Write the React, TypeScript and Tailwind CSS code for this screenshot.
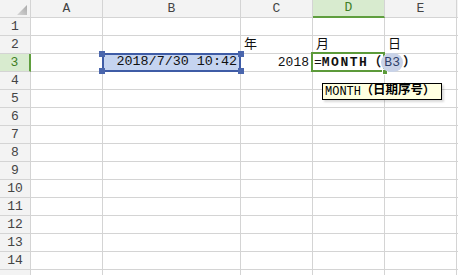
import React from 'react';

const COLS = ['A', 'B', 'C', 'D', 'E'];
const ROWS = Array.from({ length: 15 }, (_, i) => i + 1);
const FONT = { fontFamily: '"Liberation Mono", "Noto Sans CJK SC", monospace' };

function CornerCell() {
  return (
    <div className="relative border-r border-b border-[#d4d4d4] bg-[#f3f3f3]">
      <svg className="absolute left-0 top-0" width="30" height="17" viewBox="0 0 30 17">
        <defs>
          <linearGradient id="tri" x1="0" y1="1" x2="1" y2="0">
            <stop offset="0" stopColor="#d6d6d6" />
            <stop offset="1" stopColor="#a9a9a9" />
          </linearGradient>
        </defs>
        <polygon points="27,5 27,15 17,15" fill="url(#tri)" />
      </svg>
    </div>
  );
}

function ColHeader({ label }: { label: string }) {
  const active = label === 'D';
  return (
    <div
      className={
        active
          ? 'flex items-center justify-center border-r border-r-[#d4d4d4] border-b-2 border-b-[#5f9e3e] bg-[#d8ebcf] text-[#3f7f25] text-[13px]'
          : 'flex items-center justify-center border-r border-b border-[#d4d4d4] bg-[#f3f3f3] text-[#444] text-[13px]'
      }
    >
      {label}
    </div>
  );
}

function RowHeader({ n }: { n: number }) {
  const active = n === 3;
  // row 15 is only a sliver at the bottom edge, its number is hidden
  const label = n < 15 ? n : null;
  return (
    <div
      className={
        active
          ? 'flex items-center justify-center border-b border-b-[#d4d4d4] border-r-2 border-r-[#5f9e3e] bg-[#d8ebcf] text-[#3f7f25] text-[13px]'
          : 'flex items-center justify-center border-r border-b border-[#d4d4d4] bg-[#f3f3f3] text-[#444] text-[13px]'
      }
    >
      {label}
    </div>
  );
}

function Handle({ className }: { className: string }) {
  return <span className={'absolute h-[6px] w-[6px] bg-[#4a66ad] ' + className} />;
}

function DateCell() {
  return (
    <div className="relative border-r border-b border-[#d4d4d4]">
      <div className="absolute -left-px -top-px -right-px -bottom-px border-2 border-[#3f5ca6] bg-[#c5d4f0]" />
      <Handle className="-left-[4px] -top-[3px]" />
      <Handle className="-left-[4px] -bottom-[3px]" />
      <Handle className="-right-[4px] -top-[3px]" />
      <Handle className="-right-[4px] -bottom-[3px]" />
      <div className="relative flex h-full items-center justify-end pr-[3px] text-[13.4px] text-[#111]">
        2018/7/30 10:42
      </div>
    </div>
  );
}

function FormulaCell() {
  return (
    <div className="relative z-10 border-r border-b border-[#d4d4d4]">
      <div className="absolute -left-[2px] -top-[2px] -right-px -bottom-px border-2 border-[#5c9a3a]" />
      <span className="absolute -right-[4px] -bottom-[4px] h-[6px] w-[6px] border border-white bg-[#5c9a3a]" />
      <div className="relative flex h-full items-center whitespace-nowrap pl-[1px] text-[13px] text-[#111]">
        <span>=</span>
        <span className="font-bold tracking-[1.5px]">MONTH</span>
        <span className="font-bold">（</span>
        <span className="rounded-full bg-[#c9d3e8] px-[3px] text-[#2e3f6a]">B3</span>
        <span className="font-bold">）</span>
      </div>
      <div className="absolute left-[9px] top-[29px] z-20 flex h-[17px] w-[120px] items-center whitespace-nowrap border border-black bg-[#ffffe1] pl-[2px] text-black shadow-[2px_2px_2px_rgba(0,0,0,0.15)]">
        <span className="text-[12px]">MONTH</span>
        <span className="text-[12px] font-bold">（</span>
        <span className="text-[12.5px] font-bold">日期序号</span>
        <span className="text-[12px] font-bold">）</span>
      </div>
    </div>
  );
}

function Cell({ row, col }: { row: number; col: string }) {
  if (row === 3 && col === 'B') return <DateCell />;
  if (row === 3 && col === 'D') return <FormulaCell />;
  let content: React.ReactNode = null;
  let align = 'justify-start pl-[3px]';
  if (row === 2 && col === 'C') content = '年';
  if (row === 2 && col === 'D') content = '月';
  if (row === 2 && col === 'E') content = '日';
  if (row === 3 && col === 'C') {
    content = '2018';
    align = 'justify-end pr-[3px]';
  }
  return (
    <div className={'flex items-center border-r border-b border-[#d4d4d4] text-[13px] text-[#111] ' + align}>
      {content}
    </div>
  );
}

export default function App() {
  return (
    <div className="h-[275px] w-[458px] overflow-hidden bg-white" style={FONT}>
      <div className="grid grid-cols-[31px_72px_138px_72px_72px_72px_1fr] auto-rows-[18px]">
        <CornerCell />
        {COLS.map((c) => (
          <ColHeader key={c} label={c} />
        ))}
        <div className="border-b border-[#d4d4d4] bg-[#f3f3f3]" />
        {ROWS.map((r) => (
          <React.Fragment key={r}>
            <RowHeader n={r} />
            {COLS.map((c) => (
              <Cell key={c} row={r} col={c} />
            ))}
            <div className="border-b border-[#d4d4d4]" />
          </React.Fragment>
        ))}
      </div>
    </div>
  );
}
